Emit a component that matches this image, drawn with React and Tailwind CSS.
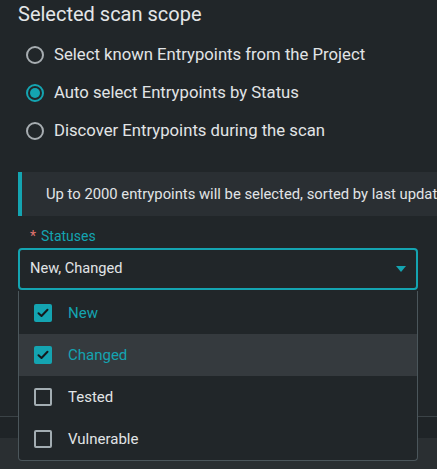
import { useState } from 'react';

const SCOPES = [
  'Select known Entrypoints from the Project',
  'Auto select Entrypoints by Status',
  'Discover Entrypoints during the scan',
];
const STATUSES = ['New', 'Changed', 'Tested', 'Vulnerable'];

const Radio = ({ checked }) => (
  <span className={`w-[18px] h-[18px] rounded-full border-2 flex items-center justify-center shrink-0 ${checked ? 'border-[#14a4b1]' : 'border-[#a7adb1]'}`}>
    {checked && <span className="w-[10px] h-[10px] rounded-full bg-[#14a4b1]" />}
  </span>
);

const Checkbox = ({ checked }) => (
  <span className={`w-[18px] h-[18px] rounded-[2px] flex items-center justify-center shrink-0 ${checked ? 'bg-[#14a4b1]' : 'border-2 border-[#a3adb2]'}`}>
    {checked && (
      <svg width="12" height="10" viewBox="0 0 12 10" fill="none">
        <path d="M1.5 5.2 L4.5 8 L10.5 1.8" stroke="#15191c" strokeWidth="2" strokeLinecap="round" strokeLinejoin="round" />
      </svg>
    )}
  </span>
);

export default function App() {
  const [scope, setScope] = useState(1);
  const [selected, setSelected] = useState(['New', 'Changed']);

  const toggle = s => setSelected(selected.includes(s) ? selected.filter(x => x !== s) : [...selected, s]);

  return (
    <div className="relative w-[437px] h-[469px] overflow-hidden bg-[#212629] text-[#e1e4e6]" style={{ fontFamily: 'Roboto, "Noto Sans", sans-serif' }}>
      <div className="flex h-full">
        <div className="flex-1 flex flex-col">
          <div className="pl-[18px] text-[20px] leading-[28px] text-[#e4e6e8]">Selected scan scope</div>
          <div className="flex flex-col pl-[26px] pt-[17px] gap-[18px]">
            {SCOPES.map((s, i) => (
              <label key={s} onClick={() => setScope(i)} className="flex items-center gap-[10px] h-[20px] text-[16.7px] cursor-pointer whitespace-nowrap">
                <Radio checked={scope === i} />
                <span>{s}</span>
              </label>
            ))}
          </div>
          <div className="mt-[31px] ml-[18px] h-[44px] flex items-center bg-[#2a2f33] border-l-4 border-[#14a4b1] pl-[24px] text-[14.8px] whitespace-nowrap overflow-hidden">
            Up to 2000 entrypoints will be selected, sorted by last update
          </div>
          <div className="mt-[11px] pl-[30px] flex items-center gap-[5px] h-[18px] text-[14px]">
            <span className="text-[#e0736f]">*</span>
            <span className="text-[#14a4b1]">Statuses</span>
          </div>
          <div className="relative mt-[3px] ml-[18px] w-[400px]">
            <div className="h-[42px] border-2 border-[#14a4b1] rounded-[4px] flex items-center justify-between pl-[10px] pr-[10px] text-[14.6px]">
              <span>New, Changed</span>
              <svg width="10" height="6" viewBox="0 0 10 6"><path d="M0 0 H10 L5 6 Z" fill="#14a4b1" /></svg>
            </div>
            <div className="absolute left-0 top-[43px] w-[400px] z-10 bg-[#212629] border border-t-0 border-[#4b565b] rounded-b-[4px] flex flex-col pt-[1px]">
              {STATUSES.map(s => {
                const on = selected.includes(s);
                return (
                  <div key={s} onClick={() => toggle(s)} className={`h-[42px] flex items-center gap-[16px] pl-[15px] text-[15px] cursor-pointer ${s === 'Changed' ? 'bg-[#353a3e]' : ''}`}>
                    <Checkbox checked={on} />
                    <span className={on ? 'text-[#14a4b1]' : 'text-[#e1e4e6]'}>{s}</span>
                  </div>
                );
              })}
            </div>
          </div>
          <div className="mt-[126px] h-[22px] border-t border-[#3b4347] bg-[#1f2427]" />
          <div className="flex-1 bg-[#2a2f32]" />
        </div>
        <div className="w-[2px] bg-[#1b1f21]" />
      </div>
    </div>
  );
}
